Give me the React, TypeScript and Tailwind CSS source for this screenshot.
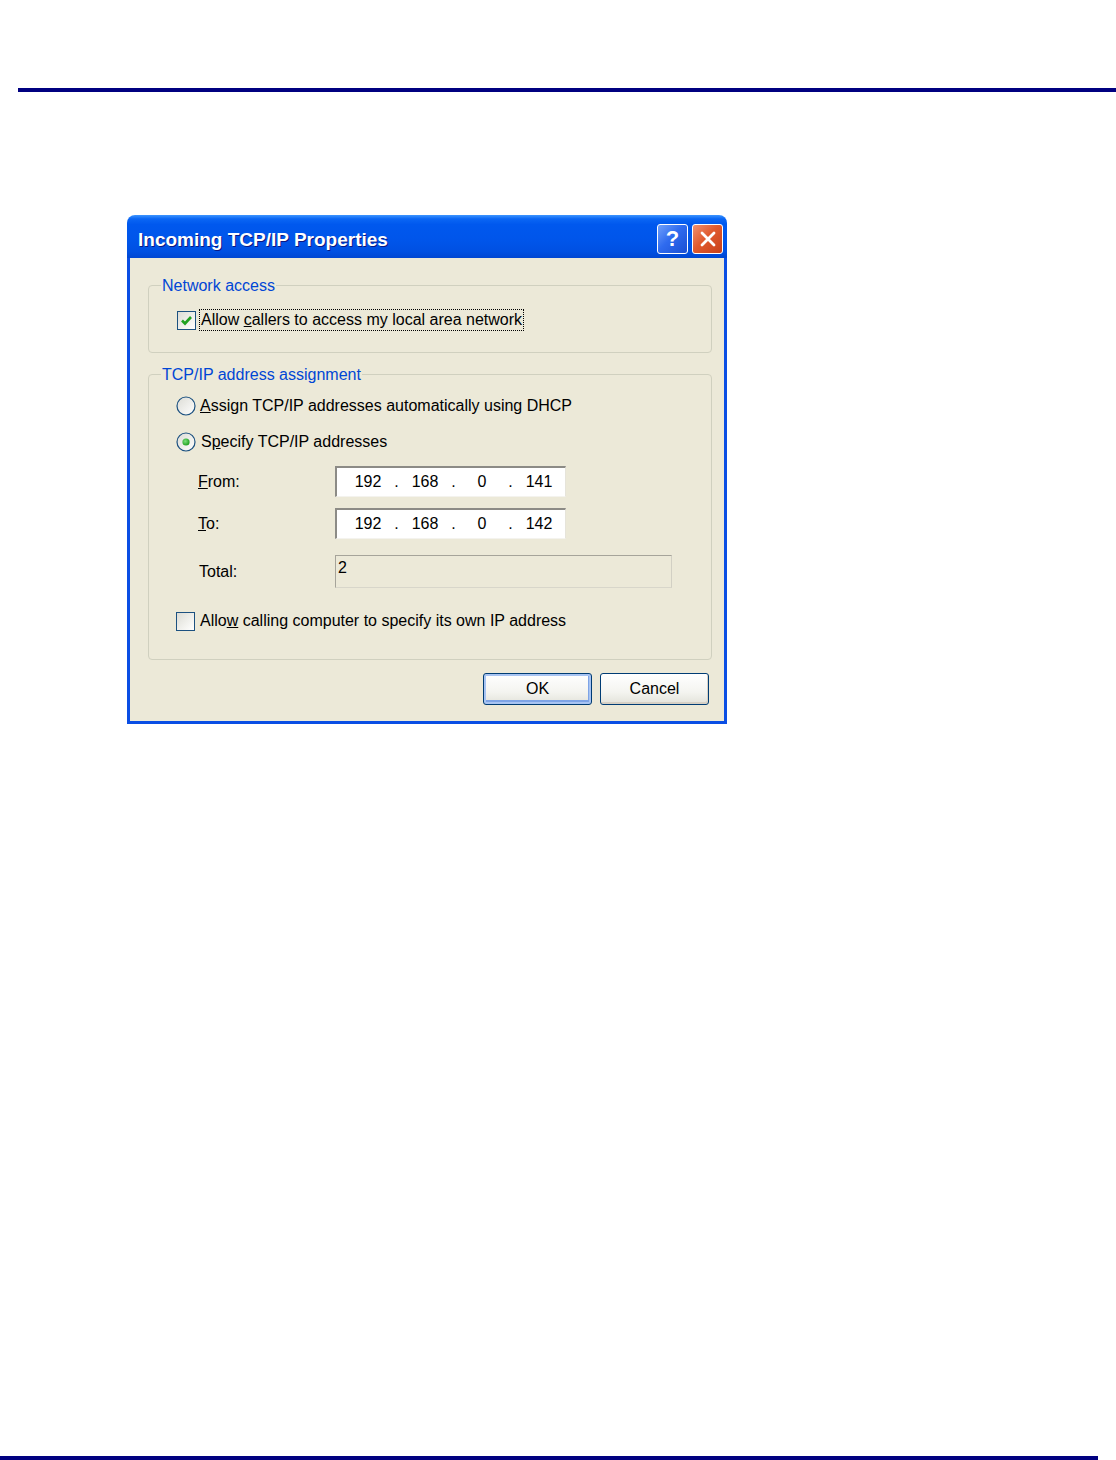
import React from 'react';

const font = "font-['Liberation_Sans',Arial,sans-serif]";

function CheckBox({ checked }: { checked: boolean }) {
  return (
    <div className="w-[19px] h-[19px] shrink-0 border border-[#1c5180] bg-[linear-gradient(135deg,#dcdcd5_0%,#f2f2ee_60%,#ffffff_100%)] flex items-center justify-center">
      {checked && (
        <svg width="13" height="13" viewBox="0 0 13 13">
          <path d="M2 6.5 L5 9.5 L11 3" fill="none" stroke="#21a121" strokeWidth="2.6" />
        </svg>
      )}
    </div>
  );
}

function Radio({ checked }: { checked: boolean }) {
  return (
    <svg width="20" height="20" viewBox="0 0 20 20" className="shrink-0">
      <defs>
        <linearGradient id={checked ? 'rg1' : 'rg0'} x1="0" y1="0" x2="1" y2="1">
          <stop offset="0" stopColor="#dcdcd5" />
          <stop offset="1" stopColor="#ffffff" />
        </linearGradient>
        <radialGradient id="dot" cx="0.4" cy="0.4" r="0.6">
          <stop offset="0" stopColor="#7be07b" />
          <stop offset="1" stopColor="#21a121" />
        </radialGradient>
      </defs>
      <circle cx="10" cy="10" r="9" fill={`url(#${checked ? 'rg1' : 'rg0'})`} stroke="#1c5180" strokeWidth="1.2" />
      {checked && <circle cx="10" cy="10" r="3.6" fill="url(#dot)" />}
    </svg>
  );
}

function IpField({ parts }: { parts: string[] }) {
  return (
    <div className="w-[231px] h-[31px] bg-white border-t-2 border-l-2 border-t-[#8c8b86] border-l-[#8c8b86] border-r border-b border-r-[#e6e4da] border-b-[#f4f3ee] flex items-center pl-[9px] text-[16px] text-black">
      {parts.map((p, i) => (
        <React.Fragment key={i}>
          <span className="w-[44px] text-center">{p}</span>
          {i < 3 && <span className="w-[13px] text-center">.</span>}
        </React.Fragment>
      ))}
    </div>
  );
}

function GroupBox({ title, className, children }: { title: string; className: string; children: React.ReactNode }) {
  return (
    <fieldset className={`ml-[18px] mr-[12px] border border-[#d0d0bf] rounded-[4px] ${className}`}>
      <legend className="ml-[12px] px-[1px] text-[16px] leading-[19px] text-[#0046d5]">{title}</legend>
      {children}
    </fieldset>
  );
}

export default function App() {
  return (
    <div className={`w-[1116px] h-[1460px] bg-white flex flex-col ${font}`}>
      <div className="h-[88px] shrink-0" />
      <div className="ml-[18px] h-[4px] bg-[#000080] shrink-0" />

      {/* dialog */}
      <div className="mt-[123px] ml-[127px] w-[600px] shrink-0 flex flex-col">
        <div className="h-[43px] rounded-t-[8px] bg-[linear-gradient(to_bottom,#3d95ff_0%,#0a66f4_9%,#0058ee_22%,#0055ea_60%,#0050e2_85%,#0046d2_100%)] flex items-center pl-[11px] pr-[4px]">
          <span className="flex-1 pt-[7px] text-white font-bold text-[19px] [text-shadow:1px_1px_0_#0a1883]">
            Incoming TCP/IP Properties
          </span>
          <div className="flex gap-[4px] pt-[4px]">
            <div className="w-[31px] h-[30px] rounded-[3px] border border-white bg-[linear-gradient(135deg,#6fa0fa_0%,#2f6bef_45%,#1a4fd3_100%)] flex items-center justify-center text-white font-bold text-[22px] leading-none">
              ?
            </div>
            <div className="w-[31px] h-[30px] rounded-[3px] border border-white bg-[linear-gradient(135deg,#f09070_0%,#e05a2e_45%,#c8401a_100%)] flex items-center justify-center">
              <svg width="18" height="18" viewBox="0 0 18 18">
                <path d="M3 3 L15 15 M15 3 L3 15" stroke="#fff" strokeWidth="2.8" strokeLinecap="round" />
              </svg>
            </div>
          </div>
        </div>

        <div className="bg-[#ece9d8] border-x-[3px] border-b-[3px] border-[#0a4ee4] pt-[18px] pb-[16px] flex flex-col text-[16px] text-black">
          <GroupBox title="Network access" className="pb-[21px]">
            <div className="mt-[14px] pl-[28px] flex items-center h-[22px]">
              <CheckBox checked />
              <span className="ml-[3px] px-[1px] leading-[20px] border border-dotted border-black">
                <span>Allow <u>c</u>allers to access my local area network</span>
              </span>
            </div>
          </GroupBox>

          <GroupBox title="TCP/IP address assignment" className="mt-[12px] pb-[27px]">
            <div className="pt-[11px] pl-[27px] flex flex-col">
              <div className="h-[22px] flex items-center gap-[4px]">
                <Radio checked={false} />
                <span><u>A</u>ssign TCP/IP addresses automatically using DHCP</span>
              </div>
              <div className="mt-[14px] h-[22px] flex items-center gap-[5px]">
                <Radio checked />
                <span>S<u>p</u>ecify TCP/IP addresses</span>
              </div>
              <div className="mt-[13px] flex items-center">
                <span className="ml-[22px] w-[137px]"><u>F</u>rom:</span>
                <IpField parts={['192', '168', '0', '141']} />
              </div>
              <div className="mt-[11px] flex items-center">
                <span className="ml-[22px] w-[137px]"><u>T</u>o:</span>
                <IpField parts={['192', '168', '0', '142']} />
              </div>
              <div className="mt-[16px] flex items-center">
                <span className="ml-[23px] w-[136px]">Total:</span>
                <div className="w-[337px] h-[33px] border border-t-[#a6a49a] border-l-[#a6a49a] border-r-[#d2d0c4] border-b-[#d8d6ca] pl-[2px] pt-[2px] leading-[20px]">
                  2
                </div>
              </div>
              <div className="mt-[22px] h-[22px] flex items-center gap-[5px]">
                <CheckBox checked={false} />
                <span>Allo<u>w</u> calling computer to specify its own IP address</span>
              </div>
            </div>
          </GroupBox>

          <div className="mt-[13px] mr-[15px] flex justify-end gap-[8px]">
            <button className="w-[109px] h-[32px] rounded-[3px] border border-[#003c74] bg-[linear-gradient(to_bottom,#ffffff_0%,#f4f4f0_60%,#e3e2da_100%)] shadow-[inset_0_0_0_2px_#a8c4f2,inset_-1px_-2px_0_2px_#7ea4e6] flex items-center justify-center text-[16px] text-black">
              OK
            </button>
            <button className="w-[109px] h-[32px] rounded-[3px] border border-[#003c74] bg-[linear-gradient(to_bottom,#ffffff_0%,#f4f4f0_60%,#e3e2da_100%)] shadow-[inset_-1px_-2px_0_0_#d6d0c5] flex items-center justify-center text-[16px] text-black">
              Cancel
            </button>
          </div>
        </div>
      </div>

      <div className="flex-1" />
      <div className="w-[1098px] h-[4px] bg-[#000080] shrink-0" />
    </div>
  );
}
